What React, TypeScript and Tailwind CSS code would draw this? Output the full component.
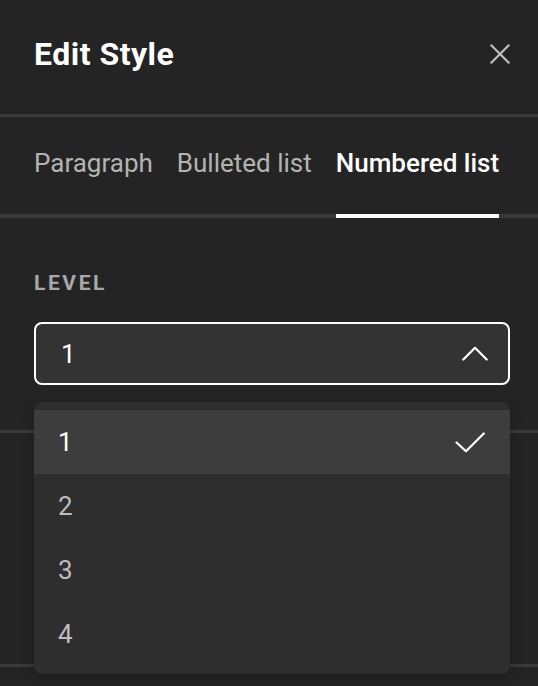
import React from "react";

function CloseIcon() {
  return (
    <svg width="20" height="20" viewBox="0 0 20 20" fill="none" stroke="#bdbdbd" strokeWidth="2.2" strokeLinecap="square">
      <line x1="1.5" y1="1.5" x2="18.5" y2="18.5" />
      <line x1="18.5" y1="1.5" x2="1.5" y2="18.5" />
    </svg>
  );
}

function ChevronUp() {
  return (
    <svg width="26" height="15" viewBox="0 0 26 15" fill="none" stroke="#ffffff" strokeWidth="2.2" strokeLinecap="round" strokeLinejoin="round">
      <polyline points="1.3,13.5 13,1.8 24.7,13.5" />
    </svg>
  );
}

function Check() {
  return (
    <svg width="30" height="21" viewBox="0 0 30 21" fill="none" stroke="#ffffff" strokeWidth="2.2" strokeLinecap="round" strokeLinejoin="round">
      <polyline points="1.5,10.5 11,19.3 28.8,1.5" />
    </svg>
  );
}

export default function App() {
  const tabs = ["Paragraph", "Bulleted list", "Numbered list"];
  const options = ["1", "2", "3", "4"];
  return (
    <div
      className="min-h-[686px] w-full bg-[#242424] text-white overflow-hidden"
      style={{ fontFamily: "Roboto, 'Noto Sans', 'Liberation Sans', sans-serif" }}
    >
      {/* header */}
      <div className="h-[114px] pt-[36px] pl-[34px] pr-[28px]">
        <div className="flex h-[36px] items-center justify-between">
          <h1 className="text-[32px] leading-[36px] font-bold tracking-[0.5px]">Edit Style</h1>
          <button className="flex h-[20px] w-[20px] items-center justify-center">
            <CloseIcon />
          </button>
        </div>
      </div>
      <div className="h-[3px] bg-[#3a3a3a]" />

      {/* tabs */}
      <div className="border-b-4 border-[#3a3a3a]">
        <div className="flex gap-[24px] pl-[34px] pr-[28px]">
          {tabs.map((t, i) => (
            <div
              key={t}
              className={
                i === 2
                  ? "-mb-[4px] border-b-4 border-white pt-[31px] pb-[36px] text-[26px] leading-[30px] font-medium text-white"
                  : "-mb-[4px] border-b-4 border-transparent pt-[31px] pb-[36px] text-[26px] leading-[30px] font-normal text-[#b3b3b3]"
              }
            >
              {t}
            </div>
          ))}
        </div>
      </div>

      {/* level section */}
      <div className="pl-[34px] pr-[28px] pt-[53px] pb-[45px]">
        <div className="text-[21px] leading-[24px] font-bold tracking-[2.6px] text-[#a8a8a8]">LEVEL</div>
        <div className="relative mt-[27px]">
          <div className="flex h-[63px] items-center justify-between rounded-[8px] border-2 border-white bg-[#333333] pl-[25px] pr-[20px]">
            <span className="text-[26px] leading-[30px] text-white">1</span>
            <ChevronUp />
          </div>
          <div className="absolute left-0 right-0 top-[80px] z-10 rounded-[8px] bg-[#2e2e2e] py-[8px] shadow-[0_4px_12px_rgba(0,0,0,0.25)]">
            {options.map((o, i) => (
              <div
                key={o}
                className={
                  i === 0
                    ? "flex h-[64px] items-center justify-between bg-[#3d3d3d] pl-[24px] pr-[25px]"
                    : "flex h-[64px] items-center justify-between pl-[24px] pr-[25px]"
                }
              >
                <span className={i === 0 ? "text-[26px] leading-[30px] text-white" : "text-[26px] leading-[30px] text-[#bdbdbd]"}>
                  {o}
                </span>
                {i === 0 ? <Check /> : null}
              </div>
            ))}
          </div>
        </div>
      </div>
      <div className="h-[3px] bg-[#3a3a3a]" />
      <div className="h-[231px]" />
      <div className="h-[3px] bg-[#3a3a3a]" />
    </div>
  );
}
